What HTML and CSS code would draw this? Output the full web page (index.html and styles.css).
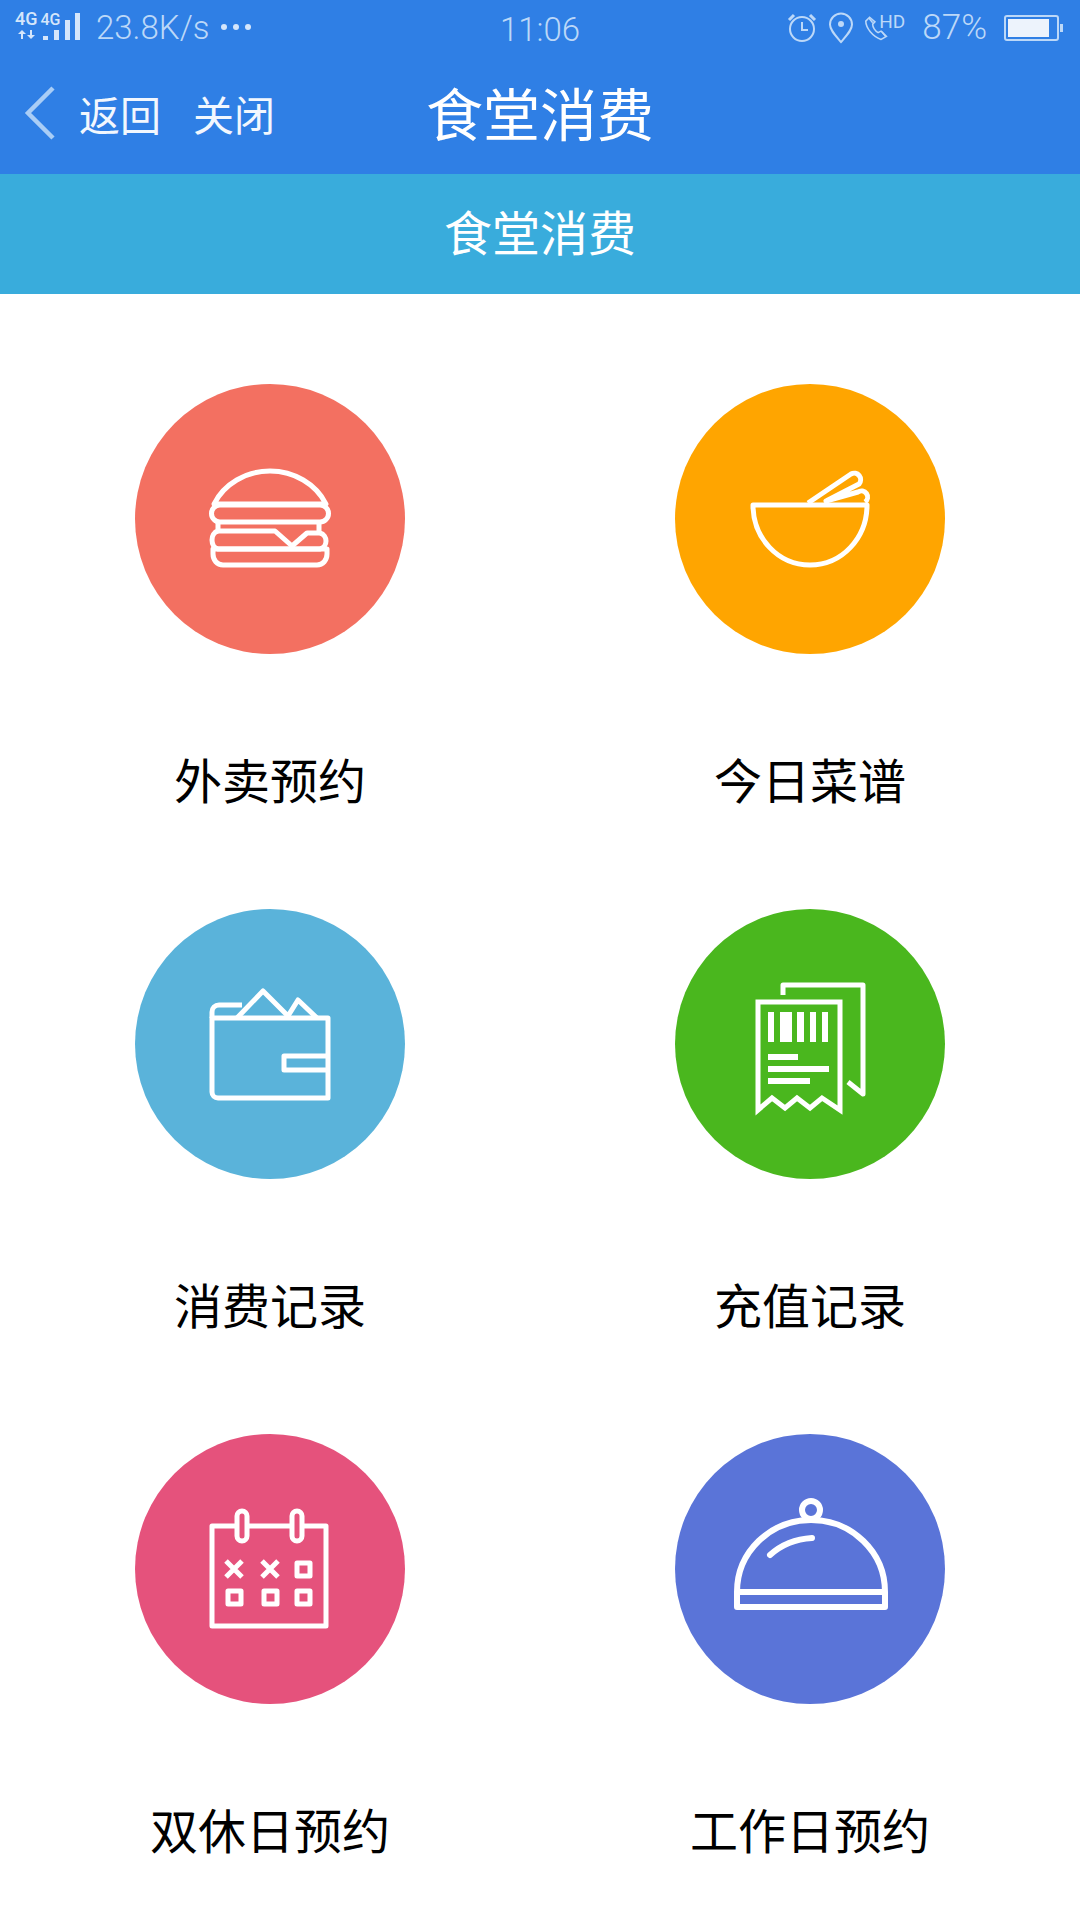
FILE: index.html
```html
<!DOCTYPE html>
<html lang="zh-CN">
<head>
    <meta charset="UTF-8">
    <meta name="viewport" content="width=device-width, initial-scale=1.0">
    <title>食堂消费</title>
    <link rel="stylesheet" href="styles.css">
</head>
<body>

    <header class="top-bar">
        <div class="status-bar">
            <div class="status-left">
                <div class="net">
                    <div class="net-labels"><span>4G</span><span class="small">4G</span></div>
                    <svg class="signal" viewBox="15 8 66 32">
                        <path d="M18 34l4-4 4 4h-3v5h-2v-5zM27 35l4 4 4-4h-3v-5h-2v5z"/>
                        <rect x="43" y="36" width="5" height="4"/>
                        <rect x="54" y="30" width="5" height="10"/>
                        <rect x="65" y="20" width="5" height="20"/>
                        <rect x="75" y="13" width="5" height="27"/>
                    </svg>
                </div>
                <span class="speed">23.8K/s</span>
                <span class="dots"><i></i><i></i><i></i></span>
            </div>
            <div class="clock">11:06</div>
            <div class="status-right">
                <svg class="s-icon" width="30" height="30" viewBox="0 0 30 30" fill="none" stroke="currentColor" stroke-width="2">
                    <circle cx="15" cy="16" r="12"/>
                    <path d="M15 9v8h6"/>
                    <path d="M2 7l5-5M28 7l-5-5" stroke-width="3"/>
                </svg>
                <svg class="s-icon" width="26" height="32" viewBox="0 0 26 32" fill="none" stroke="currentColor" stroke-width="2">
                    <path d="M13 30C7 23 2 18 2 12.500a11 11 0 0 1 22 0C24 18 19 23 13 30z"/>
                    <circle cx="13" cy="12" r="3" fill="currentColor" stroke="none"/>
                </svg>
                <div class="call">
                    <svg width="30" height="32" viewBox="0 0 30 32" fill="none" stroke="currentColor" stroke-width="2">
                        <path d="M6 2L1 7c0 9 9 20 20 24l7-4-7-7-4 2C13 20 10 15 10 11l3-3z"/>
                        <path d="M5 3l5 6M22 21l5 6"/>
                    </svg>
                    <span class="hd">HD</span>
                </div>
                <span class="percent">87%</span>
                <div class="battery"><div class="battery-body"><div class="battery-fill"></div></div><div class="battery-tip"></div></div>
            </div>
        </div>
        <nav class="nav-bar">
            <div class="nav-left">
                <svg class="back-icon" width="32" height="54" viewBox="0 0 32 54" fill="none" stroke="#a9cdf6" stroke-width="4.500">
                    <path d="M29 2L4 27l25 25"/>
                </svg>
                <a class="nav-link">返回</a>
                <a class="nav-link">关闭</a>
            </div>
            <h1 class="nav-title">食堂消费</h1>
        </nav>
    </header>

    <div class="sub-title">食堂消费</div>

    <main class="menu">
        <div class="menu-item">
            <div class="circle c-red">
                <svg class="icon" viewBox="135 384 270 270">
                    <path d="M214 504C224 484 246 471 270 471s46 13 56 33z"/>
                    <path d="M220 505h100a8.500 8.500 0 0 1 0 17H220a8.500 8.500 0 0 1 0-17z"/>
                    <path d="M218 522v9h57l17 15 15-13h12v-11"/>
                    <path d="M218 531c-8 2-8 16 0 18h102c8-2 8-14 0-16"/>
                    <path d="M213 549h114v5c0 6-4 11-10 11H223c-6 0-10-5-10-11z"/>
                </svg>
            </div>
            <div class="label">外卖预约</div>
        </div>
        <div class="menu-item">
            <div class="circle c-orange">
                <svg class="icon" viewBox="675 384 270 270">
                    <path d="M753 505h114c0 33-25 60-57 60s-57-27-57-60z"/>
                    <path d="M808 503l43-29a6.500 6.500 0 0 1 8 10l-33 17 32-9a6 6 0 0 1 7 10"/>
                </svg>
            </div>
            <div class="label">今日菜谱</div>
        </div>
        <div class="menu-item">
            <div class="circle c-blue">
                <svg class="icon" viewBox="135 909 270 270">
                    <path d="M212 1018h116v80H218a6 6 0 0 1-6-6z"/>
                    <path d="M212 1018v-6c0-4 3-7 7-7h23"/>
                    <path d="M237 1018l26-27 25 25 10-16 19 18"/>
                    <path d="M328 1056h-44v14h44"/>
                </svg>
            </div>
            <div class="label">消费记录</div>
        </div>
        <div class="menu-item">
            <div class="circle c-green">
                <svg class="icon" viewBox="675 909 270 270">
                    <path d="M783 995v-10h80v109l-15-12"/>
                    <path d="M758 1110v-108h82v108l-18-12-12 10-13-10-12 10-13-10z" stroke-linejoin="miter"/>
                    <path class="solid" d="M768 1012h6v30h-6zM780 1012h12v30h-12zM797 1012h7v30h-7zM810 1012h6v30h-6zM822 1012h6v30h-6zM768 1054h30v6h-30zM768 1066h61v6h-61zM768 1078h42v6h-42z"/>
                </svg>
            </div>
            <div class="label">充值记录</div>
        </div>
        <div class="menu-item">
            <div class="circle c-pink">
                <svg class="icon" viewBox="135 1434 270 270">
                    <path d="M237 1526h-25v100h114v-100h-24M247 1526h45"/>
                    <rect x="237" y="1511" width="10" height="30" rx="5"/>
                    <rect x="292" y="1511" width="10" height="30" rx="5"/>
                    <path d="M226 1561l16 16M242 1561l-16 16M262 1561l16 16M278 1561l-16 16"/>
                    <rect x="297" y="1563" width="13" height="13"/>
                    <rect x="228" y="1591" width="13" height="13"/>
                    <rect x="264" y="1591" width="13" height="13"/>
                    <rect x="297" y="1591" width="13" height="13"/>
                </svg>
            </div>
            <div class="label">双休日预约</div>
        </div>
        <div class="menu-item">
            <div class="circle c-indigo">
                <svg class="icon icon-bold" viewBox="675 1434 270 270">
                    <circle cx="811" cy="1510" r="9"/>
                    <path d="M737 1592c0-40 33-72 74-72s74 32 74 72v15H737z"/>
                    <path d="M737 1592h148"/>
                    <path d="M770 1555c11-10 26-16 42-17" stroke-linecap="round"/>
                </svg>
            </div>
            <div class="label">工作日预约</div>
        </div>
    </main>

</body>
</html>
```

FILE: styles.css
```css
* {
    box-sizing: border-box;
}
body {
    margin: 0;
    background: #fff;
    font-family: "Noto Sans CJK SC", "Noto Sans", sans-serif;
    color: #000;
}
.top-bar {
    height: 174px;
    background: #2f7fe5;
    color: #fff;
}
.status-bar {
    height: 56px;
    display: grid;
    grid-template-columns: 1fr auto 1fr;
    align-items: center;
    color: #bcd8f8;
    font-family: Roboto, sans-serif;
    font-weight: 300;
}
.status-left {
    display: flex;
    align-items: center;
    padding-left: 15px;
}
.net {
    position: relative;
    width: 66px;
    height: 40px;
}
.net-labels {
    display: flex;
    align-items: baseline;
    gap: 3px;
    margin-top: 2px;
    font-size: 18px;
    font-weight: 500;
    line-height: 18px;
    color: #d5e6fb;
}
.net-labels .small {
    font-size: 16px;
}
.signal {
    position: absolute;
    left: 0;
    top: 0;
    width: 66px;
    height: 32px;
    fill: #d5e6fb;
}
.speed {
    margin-left: 15px;
    font-size: 33px;
    line-height: 40px;
}
.dots {
    display: flex;
    gap: 6px;
    margin-left: 11px;
    margin-bottom: 2px;
}
.dots i {
    width: 6px;
    height: 6px;
    border-radius: 50%;
    background: #d5e6fb;
}
.clock {
    font-size: 33px;
    line-height: 40px;
    padding-top: 3px;
}
.status-right {
    display: flex;
    align-items: center;
    justify-content: flex-end;
    padding-right: 17px;
}
.s-icon {
    margin-right: 11px;
}
.call {
    display: flex;
    width: 40px;
}
.hd {
    font-size: 19px;
    font-weight: 400;
    line-height: 20px;
    margin-left: -9px;
}
.percent {
    margin-left: 17px;
    font-size: 35px;
    line-height: 40px;
}
.battery {
    display: flex;
    align-items: center;
    margin-left: 17px;
}
.battery-body {
    width: 55px;
    height: 26px;
    border: 2px solid #bcd8f8;
    border-radius: 3px;
    padding: 2px;
}
.battery-fill {
    width: 87%;
    height: 100%;
    background: #edf3fc;
}
.battery-tip {
    width: 3px;
    height: 8px;
    margin-left: 1px;
    background: #bcd8f8;
}
.nav-bar {
    height: 118px;
    padding-bottom: 4px;
    display: grid;
    grid-template-columns: 1fr auto 1fr;
    align-items: center;
}
.nav-left {
    display: flex;
    align-items: center;
    padding-left: 24px;
    grid-column: 1;
}
.back-icon {
    margin-right: 23px;
}
.nav-link {
    font-size: 41px;
    line-height: 56px;
    margin-right: 32px;
    color: #f2f7fe;
}
.nav-title {
    margin: 0 0 4px;
    font-size: 57px;
    font-weight: 400;
    line-height: 80px;
}
.sub-title {
    height: 120px;
    background: #39acdc;
    color: #fff;
    font-size: 48px;
    line-height: 112px;
    text-align: center;
}
.menu {
    display: grid;
    grid-template-columns: 1fr 1fr;
    grid-auto-rows: 525px;
}
.menu-item {
    padding-top: 90px;
    display: flex;
    flex-direction: column;
    align-items: center;
}
.circle {
    width: 270px;
    height: 270px;
    border-radius: 50%;
}
.c-red { background: #f37061; }
.c-orange { background: #ffa500; }
.c-blue { background: #5ab3da; }
.c-green { background: #4ab71e; }
.c-pink { background: #e5527c; }
.c-indigo { background: #5a74d8; }
.icon {
    display: block;
    width: 270px;
    height: 270px;
    fill: none;
    stroke: #fff;
    stroke-width: 5;
    stroke-linejoin: round;
}
.icon-bold {
    stroke-width: 6;
}
.icon .solid {
    fill: #fff;
    stroke: none;
}
.label {
    margin-top: 89px;
    font-size: 48px;
    line-height: 70px;
}
```
